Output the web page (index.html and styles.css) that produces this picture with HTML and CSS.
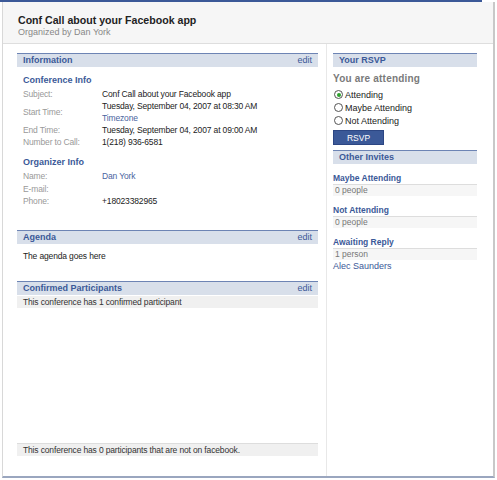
FILE: index.html
```html
<!DOCTYPE html>
<html>
<head>
<meta charset="utf-8">
<link rel="stylesheet" href="styles.css">
</head>
<body>
<div class="topbar"></div>
<div class="page">
  <div class="header">
    <div class="title">Conf Call about your Facebook app</div>
    <div class="subtitle">Organized by Dan York</div>
  </div>
  <div class="content">
    <div class="main">
      <div class="box">
        <div class="box-head"><span>Information</span><span class="edit">edit</span></div>
        <div class="box-body">
          <div class="subhead">Conference Info</div>
          <div class="row"><div class="label">Subject:</div><div class="value">Conf Call about your Facebook app</div></div>
          <div class="row"><div class="label">Start Time:</div><div class="value">Tuesday, September 04, 2007 at 08:30 AM<br><span class="link">Timezone</span></div></div>
          <div class="row"><div class="label">End Time:</div><div class="value">Tuesday, September 04, 2007 at 09:00 AM</div></div>
          <div class="row"><div class="label">Number to Call:</div><div class="value">1(218) 936-6581</div></div>
          <div class="subhead sub2">Organizer Info</div>
          <div class="row org"><div class="label">Name:</div><div class="value"><span class="link">Dan York</span></div></div>
          <div class="row org"><div class="label">E-mail:</div><div class="value"></div></div>
          <div class="row org"><div class="label">Phone:</div><div class="value">+18023382965</div></div>
        </div>
      </div>
      <div class="box agenda">
        <div class="box-head"><span>Agenda</span><span class="edit">edit</span></div>
        <div class="plain">The agenda goes here</div>
      </div>
      <div class="box confirmed">
        <div class="box-head"><span>Confirmed Participants</span><span class="edit">edit</span></div>
        <div class="grayrow">This conference has 1 confirmed participant</div>
      </div>
      <div class="spacer"></div>
      <div class="grayrow bottomrow">This conference has 0 participants that are not on facebook.</div>
    </div>
    <div class="side">
      <div class="box">
        <div class="box-head"><span>Your RSVP</span></div>
        <div class="attending">You are attending</div>
        <div class="radio"><span class="dot on"></span>Attending</div>
        <div class="radio"><span class="dot"></span>Maybe Attending</div>
        <div class="radio"><span class="dot"></span>Not Attending</div>
        <div class="btn">RSVP</div>
      </div>
      <div class="box invites">
        <div class="box-head"><span>Other Invites</span></div>
        <div class="inv-title">Maybe Attending</div>
        <div class="inv-count">0 people</div>
        <div class="inv-title">Not Attending</div>
        <div class="inv-count">0 people</div>
        <div class="inv-title">Awaiting Reply</div>
        <div class="inv-count">1 person</div>
        <div class="inv-name">Alec Saunders</div>
      </div>
    </div>
  </div>
</div>
</body>
</html>
```
FILE: styles.css
```css
html, body {
  margin: 0;
  padding: 0;
  background: #fff;
}
body {
  font-family: "Liberation Sans", Arial, sans-serif;
  font-size: 8.5px;
  letter-spacing: -0.15px;
  color: #333;
}
.topbar {
  width: 482px;
  height: 2px;
  background: #3b5998;
}
.page {
  margin-left: 2px;
  width: 490px;
  height: 474px;
  border-left: 1px solid #d8d8d8;
  border-right: 2px solid #c8c8c8;
  border-bottom: 2px solid #9aa6bf;
  display: flex;
  flex-direction: column;
  box-sizing: content-box;
}
.header {
  height: 42px;
  background: #f6f6f6;
  border-bottom: 1px solid #dedede;
  padding: 0 0 0 15px;
  box-sizing: border-box;
}
.title {
  font-weight: bold;
  font-size: 10.6px;
  letter-spacing: 0;
  color: #222;
  margin-top: 12px;
  line-height: 13px;
}
.subtitle {
  color: #888;
  font-size: 9px;
  letter-spacing: 0;
  line-height: 11px;
}
.content {
  flex: 1;
  display: flex;
}
.main {
  width: 324px;
  border-right: 1px solid #e8e8e8;
  padding: 9px 8px 20px 14px;
  box-sizing: border-box;
  display: flex;
  flex-direction: column;
}
.side {
  flex: 1;
  padding: 9px 16px 0 6px;
  box-sizing: border-box;
}
.box-head {
  display: flex;
  justify-content: space-between;
  background: #d8dfea;
  border-top: 1px solid #6d84b4;
  height: 13px;
  line-height: 13px;
  padding: 0 6px;
  font-weight: bold;
  font-size: 9px;
  letter-spacing: 0;
  color: #3b5998;
}
.edit {
  font-weight: normal;
  color: #3b5998;
}
.box-body {
  padding: 7px 6px 0 6px;
}
.subhead {
  font-weight: bold;
  font-size: 9px;
  letter-spacing: 0;
  color: #3b5998;
  line-height: 12px;
  margin-bottom: 2px;
}
.sub2 {
  margin-top: 8px;
}
.row {
  display: flex;
  align-items: center;
  line-height: 12px;
}
.row.org {
  line-height: 12.5px;
}
.label {
  width: 79px;
  color: #999;
  flex-shrink: 0;
}
.value {
  color: #222;
}
.row .value:empty {
  height: 12px;
}
.link {
  color: #4a64a0;
}
.agenda {
  margin-top: 22px;
}
.plain {
  padding: 6px 6px 0 6px;
  color: #222;
  line-height: 12px;
}
.confirmed {
  margin-top: 19px;
}
.grayrow {
  background: #f0f0f0;
  border-top: 1px solid #ddd;
  padding: 0 6px;
  line-height: 12px;
  color: #333;
}
.confirmed .grayrow {
  border-top: none;
  margin-top: 1px;
}
.spacer {
  flex: 1;
}
.attending {
  font-weight: bold;
  color: #7a7a7a;
  font-size: 10px;
  letter-spacing: 0.2px;
  margin: 6px 0 3px 0;
  line-height: 12px;
}
.radio {
  display: flex;
  align-items: center;
  height: 13px;
  color: #222;
  font-size: 9px;
  letter-spacing: 0;
}
.dot {
  width: 9px;
  height: 9px;
  border: 1px solid #555;
  border-radius: 50%;
  margin-right: 2px;
  margin-left: 1px;
  background: #fff;
  box-sizing: border-box;
  display: inline-flex;
  align-items: center;
  justify-content: center;
}
.dot.on::after {
  content: "";
  width: 4px;
  height: 4px;
  border-radius: 50%;
  background: #2ea12e;
}
.btn {
  margin-top: 3px;
  width: 51px;
  height: 15px;
  line-height: 15px;
  background: #3b5998;
  border: 1px solid #2c4683;
  box-sizing: border-box;
  color: #fff;
  text-align: center;
  font-size: 8.5px;
  letter-spacing: 0;
}
.invites {
  margin-top: 5px;
}
.inv-title {
  font-weight: bold;
  color: #3b5998;
  font-size: 8.5px;
  letter-spacing: 0;
  margin-top: 9px;
  line-height: 11px;
}
.inv-count {
  background: #f6f6f6;
  border-top: 1px solid #ddd;
  color: #777;
  font-size: 8.5px;
  letter-spacing: 0;
  line-height: 11px;
  padding: 0 2px;
}
.inv-name {
  color: #3b5998;
  line-height: 12px;
  font-size: 9px;
  letter-spacing: 0;
}
```
